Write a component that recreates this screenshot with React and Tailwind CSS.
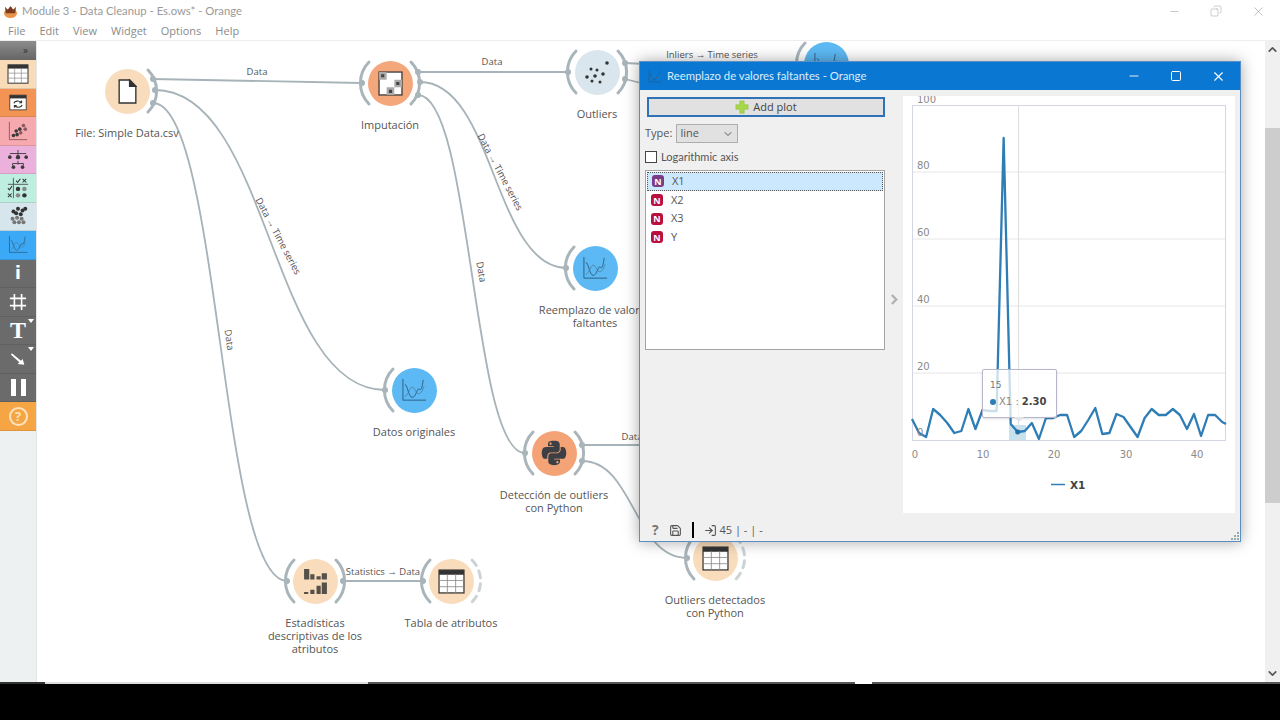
import { FaPython } from 'react-icons/fa';
import { ChevronDown, ChevronUp, Minus, Square, X, Copy, Save, LogIn } from 'lucide-react';

const menus = ['File', 'Edit', 'View', 'Widget', 'Options', 'Help'];

const seriesY = [419, 433, 437, 409, 415, 423, 433, 431, 409, 429, 410, 411, 411, 138, 424, 432, 431, 423, 439, 418, 418, 415, 415, 437, 431, 420, 408, 434, 433, 414, 417, 427, 437, 418, 409, 415, 415, 409, 415, 429, 414, 436, 415, 415, 422];
const seriesPoints = seriesY.map((y, i) => `${912 + i * 7.05},${y}`).join(' ') + ' 1226,424';

function TableIcon({ className }) {
  return (
    <svg viewBox="0 0 26 24" className={className} fill="none">
      <rect x="1" y="1" width="24" height="22" fill="#fff" stroke="#333" strokeWidth="1.2" />
      <rect x="1" y="1" width="24" height="4.5" fill="#333" />
      <path d="M9 5v18M17 5v18M1 11h24M1 17h24" stroke="#888" strokeWidth="0.8" />
    </svg>
  );
}

function ChartIcon({ className }) {
  return (
    <svg viewBox="0 0 28 26" className={className} fill="none" stroke="#23506f" strokeWidth="0.9">
      <path d="M2 1v23h25" />
      <path d="M4 7c3 0 4 14 8 14s5-9 7-9 3 4 5-10" />
      <path d="M4 20c4-1 5-10 8-10s4 7 7 7 4-4 6-8" stroke="#4a7d9e" />
    </svg>
  );
}

// toolbox buttons
const tools = [
  {
    bg: 'bg-[#f8dcb8]',
    icon: <TableIcon className="w-[22px] h-[20px]" />,
  },
  {
    bg: 'bg-[#f49454]',
    icon: (
      <svg viewBox="0 0 22 20" className="w-[18px] h-[17px]" fill="none">
        <rect x="1" y="1" width="20" height="18" fill="#fff" stroke="#333" />
        <rect x="1" y="1" width="20" height="4" fill="#333" />
        <path d="M6 11c1-3 6-4 9-1M16 13c-1 3-6 4-9 1" stroke="#333" strokeWidth="1.4" />
        <path d="M16 7v4h-4zM6 17v-4h4z" fill="#333" />
      </svg>
    ),
  },
  {
    bg: 'bg-[#f6a9ae]',
    icon: (
      <svg viewBox="0 0 22 22" className="w-[20px] h-[20px]" fill="#3a3a3a">
        <path d="M1.500 1v19.500H21" fill="none" stroke="#8a5a60" strokeWidth="1" />
        <circle cx="6" cy="16" r="2" />
        <circle cx="10" cy="15" r="2" />
        <circle cx="9" cy="11" r="2" />
        <circle cx="13" cy="9" r="2" />
        <circle cx="17" cy="5" r="2" fill="#8a5a60" />
        <circle cx="14" cy="13" r="2" fill="#8a5a60" />
        <circle cx="19" cy="9" r="2" fill="#8a5a60" />
      </svg>
    ),
  },
  {
    bg: 'bg-[#ecb0dc]',
    icon: (
      <svg viewBox="0 0 24 22" className="w-[22px] h-[20px]" fill="#3a3a3a">
        <path d="M12 1v6M3 5h18M12 13v4M6 18v-2h12v2" fill="none" stroke="#3a3a3a" strokeWidth="1" />
        <circle cx="3" cy="9" r="2" />
        <circle cx="12" cy="9" r="2.400" />
        <circle cx="21" cy="9" r="2" />
        <circle cx="7" cy="20" r="2" />
        <circle cx="17" cy="20" r="2" />
      </svg>
    ),
  },
  {
    bg: 'bg-[#bdeee0]',
    icon: (
      <svg viewBox="0 0 24 24" className="w-[22px] h-[22px]" fill="#333">
        <path d="M7 1v22M1 8h22" fill="none" stroke="#555" strokeWidth="1" />
        <path d="M10 4l1.500 2 3-4M17 2l4 4m0-4l-4 4M1 12l1.500 2 3-4M1 18l4 4m0-4l-4 4" fill="none" stroke="#333" strokeWidth="1.100" />
        <circle cx="12" cy="13" r="2.400" />
        <circle cx="19" cy="13" r="2.400" fill="#888" />
        <circle cx="12" cy="20" r="2.400" fill="#888" />
        <circle cx="19" cy="20" r="2.400" />
      </svg>
    ),
  },
  {
    bg: 'bg-[#d7e5ec]',
    icon: (
      <svg viewBox="0 0 22 22" className="w-[20px] h-[20px]">
        <g fill="#333">
          <circle cx="6" cy="6" r="2.200" />
          <circle cx="11" cy="3" r="2.200" />
          <circle cx="16" cy="5" r="2.200" />
          <circle cx="9" cy="8" r="2.200" />
          <circle cx="14" cy="9" r="2.200" />
          <circle cx="19" cy="3" r="2.200" />
        </g>
        <g fill="#777">
          <circle cx="5" cy="14" r="2.200" />
          <circle cx="10" cy="13" r="2.200" />
          <circle cx="15" cy="14" r="2.200" />
          <circle cx="7" cy="18" r="2.200" />
          <circle cx="12" cy="18" r="2.200" />
          <circle cx="17" cy="18" r="2.200" />
        </g>
      </svg>
    ),
  },
  {
    bg: 'bg-[#3ca9f6]',
    icon: <ChartIcon className="w-[20px] h-[19px]" />,
  },
  {
    bg: 'bg-[#6b6b6b]',
    icon: <span className="text-white font-bold text-[17px] leading-none font-['DejaVu_Sans',sans-serif]">i</span>,
  },
  {
    bg: 'bg-[#6b6b6b]',
    icon: (
      <svg viewBox="0 0 20 20" className="w-[18px] h-[18px]" stroke="#fff" strokeWidth="1.800">
        <path d="M6 1v18M14 1v18M1 6h18M1 14h18" />
      </svg>
    ),
  },
  {
    bg: 'bg-[#6b6b6b]',
    corner: true,
    icon: <span className="text-white font-bold text-[24px] leading-none font-['Liberation_Serif',serif]">T</span>,
  },
  {
    bg: 'bg-[#6b6b6b]',
    corner: true,
    icon: (
      <svg viewBox="0 0 18 16" className="w-[15px] h-[14px]" fill="#fff">
        <path d="M1 1l11 9 2-2 2 7-8-1 2-2L0 3z" />
      </svg>
    ),
  },
  {
    bg: 'bg-[#6b6b6b]',
    icon: (
      <div className="flex gap-[5px]">
        <div className="w-[5px] h-[17px] bg-white" />
        <div className="w-[5px] h-[17px] bg-white" />
      </div>
    ),
  },
  {
    bg: 'bg-[#f6a545]',
    icon: (
      <div className="w-[19px] h-[19px] mt-[2px] rounded-full border-2 border-[#fde3bd] flex items-center justify-center text-[#fde3bd] text-[13px] font-bold leading-none">
        ?
      </div>
    ),
  },
];

function Toolbox() {
  return (
    <div className="w-[37px] shrink-0 flex flex-col bg-[#eef1f2] border-r border-[#e4e7e8]">
      <div className="h-[19px] bg-gradient-to-b from-[#8c8c8c] to-[#666] text-right pr-2 text-[10px] leading-[18px] text-[#333]">
        »
      </div>
      {tools.map((t, i) => (
        <div key={i} className={`relative h-[28.5px] flex items-center justify-center border-b border-black/10 ${t.bg}`}>
          {t.icon}
          {t.corner && <div className="absolute top-[2px] right-[2px] border-x-[3px] border-t-[4px] border-x-transparent border-t-white" />}
        </div>
      ))}
    </div>
  );
}

function Node({ pos, fill, left, right, dashed, label, children }) {
  return (
    <div className={`absolute w-[70px] h-[70px] flex items-center justify-center ${pos}`}>
      <svg viewBox="0 0 70 70" className="absolute inset-0" fill="none" stroke="#a9b5ba" strokeWidth="3" strokeLinecap="round">
        {left && <path d="M14 14A30 30 0 0 0 14 56" />}
        {right && <path d="M56 14A30 30 0 0 1 56 56" />}
        {dashed && <path d="M56 14A30 30 0 0 1 56 56" stroke="#ccd3d6" strokeDasharray="7 6" />}
      </svg>
      <div className={`w-[45px] h-[45px] rounded-full flex items-center justify-center ${fill}`}>{children}</div>
      {label && (
        <div className="absolute top-[70px] left-[-45px] w-[160px] text-center text-[11px] leading-[13px] text-[#555] whitespace-pre-line">
          {label}
        </div>
      )}
    </div>
  );
}

function Wires() {
  return (
    <svg viewBox="37 41 1228 641" className="absolute inset-0 w-full h-full" fill="none" stroke="#a7b3b8" strokeWidth="1.800">
      <path d="M152 79L362 83" />
      <path d="M155 90C270 90 270 390 385 390" />
      <path d="M153 103C220 103 220 581 287 581" />
      <path d="M418 72H570" />
      <path d="M420 82C494 82 494 268 567 268" />
      <path d="M418 95C472 95 472 453 525 453" />
      <path d="M625 63L645 64" />
      <path d="M625 79L645 84" />
      <path d="M582 445H645" />
      <path d="M582 461C634 461 634 558 687 558" />
      <path d="M343 581H423" />
      <g fill="#a7b3b8" stroke="none">
        <circle cx="153" cy="79" r="3" />
        <circle cx="155" cy="90" r="3" />
        <circle cx="153" cy="103" r="3" />
        <circle cx="362" cy="83" r="3" />
        <circle cx="418" cy="72" r="3" />
        <circle cx="420" cy="82" r="3" />
        <circle cx="418" cy="95" r="3" />
        <circle cx="568" cy="72" r="3" />
        <circle cx="625" cy="63" r="3" />
        <circle cx="625" cy="79" r="3" />
        <circle cx="566" cy="268" r="3" />
        <circle cx="385" cy="390" r="3" />
        <circle cx="525" cy="453" r="3" />
        <circle cx="582" cy="445" r="3" />
        <circle cx="582" cy="461" r="3" />
        <circle cx="687" cy="558" r="3" />
        <circle cx="287" cy="581" r="3" />
        <circle cx="343" cy="581" r="3" />
        <circle cx="423" cy="581" r="3" />
      </g>
      <g fill="#555" stroke="none" fontSize="9.500" textAnchor="middle">
        <text x="257" y="75">Data</text>
        <text x="492" y="65">Data</text>
        <text x="712" y="58">Inliers → Time series</text>
        <text x="383" y="575">Statistics → Data</text>
        <text x="632" y="440">Data</text>
        <text transform="translate(229 340) rotate(82)" y="3">Data</text>
        <text transform="translate(481 272) rotate(80)" y="3">Data</text>
        <text transform="translate(278 236) rotate(62)" y="3">Data → Time series</text>
        <text transform="translate(500 172) rotate(62)" y="3">Data → Time series</text>
        <text transform="translate(640 512) rotate(68)" y="-3">Data</text>
      </g>
    </svg>
  );
}

function Canvas() {
  return (
    <div className="relative flex-1 overflow-hidden bg-white">
      <Wires />
      <Node pos="left-[55px] top-[15px]" fill="bg-[#f9dcbb]" right label="File: Simple Data.csv">
        <svg viewBox="0 0 18 24" className="w-[19px] h-[25px]" fill="#fff" stroke="#333" strokeWidth="1.300">
          <path d="M1 1h10l6 6v16H1z" />
          <path d="M11 1l6 6h-6z" fill="#333" />
        </svg>
      </Node>
      <Node pos="left-[318px] top-[7px]" fill="bg-[#f5a77c]" left right label="Imputación">
        <svg viewBox="0 0 24 24" className="w-[25px] h-[25px]">
          <rect x="1" y="1" width="22" height="22" fill="#fff" stroke="#333" strokeWidth="1.200" />
          <path d="M1 1h7.300v7.300H1zM15.700 8.300H23v7.300h-7.300zM8.300 15.700h7.300V23H8.300z" fill="#aaa" />
          <path d="M3 3h3v3H3zM17.500 10.500h3v3h-3zM10.500 18h3v3h-3z" fill="#444" />
        </svg>
      </Node>
      <Node pos="left-[525px] top-[-4px]" fill="bg-[#d9e6ee]" left right label="Outliers">
        <svg viewBox="0 0 26 24" className="w-[28px] h-[24px]" fill="#333">
          <circle cx="23" cy="3" r="1.800" />
          <circle cx="7" cy="9" r="1.500" />
          <circle cx="13" cy="10" r="1.500" />
          <circle cx="19" cy="14" r="1.800" />
          <circle cx="11" cy="16" r="1.800" />
          <circle cx="3" cy="17" r="1.800" />
          <circle cx="8" cy="21" r="1.500" />
          <circle cx="16" cy="22" r="1.500" />
        </svg>
      </Node>
      <Node pos="left-[523px] top-[192px]" fill="bg-[#5db9f4]" left label={'Reemplazo de valores\nfaltantes'}>
        <ChartIcon className="w-[26px] h-[24px]" />
      </Node>
      <Node pos="left-[342px] top-[314px]" fill="bg-[#5db9f4]" left label="Datos originales">
        <ChartIcon className="w-[26px] h-[24px]" />
      </Node>
      <Node pos="left-[482px] top-[377px]" fill="bg-[#f4a376]" left right label={'Detección de outliers\ncon Python'}>
        <FaPython className="w-[28px] h-[28px] text-[#3c4045]" />
      </Node>
      <Node pos="left-[643px] top-[482px]" fill="bg-[#f9dcbb]" left dashed label={'Outliers detectados\ncon Python'}>
        <TableIcon className="w-[27px] h-[25px]" />
      </Node>
      <Node pos="left-[243px] top-[505px]" fill="bg-[#f9dcbb]" left right label={'Estadísticas\ndescriptivas de los\natributos'}>
        <svg viewBox="0 0 24 26" className="w-[25px] h-[27px]" fill="#55504a">
          <path d="M1 1h5v10H1zM7 6h4v5H7zM13 8h4v3h-4zM18 5h5v6h-5zM1 23h4v2H1zM7 21h4v4H7zM13 17h4v8h-4zM18 14h5v11h-5z" />
        </svg>
      </Node>
      <Node pos="left-[379px] top-[505px]" fill="bg-[#f9dcbb]" left dashed label="Tabla de atributos">
        <TableIcon className="w-[27px] h-[25px]" />
      </Node>
      <Node pos="left-[754px] top-[-12px]" fill="bg-[#5db9f4]" left>
        <ChartIcon className="w-[26px] h-[24px]" />
      </Node>
    </div>
  );
}

function ListRow({ name, selected }) {
  return (
    <div className={`h-[18.700px] flex items-center gap-2 pl-[4px] ${selected ? 'bg-[#cce8ff] border border-dotted border-[#555]' : ''}`}>
      <span className={`w-[12px] h-[12px] rounded-[3px] flex items-center justify-center text-white text-[9px] font-bold leading-none ${selected ? 'bg-[#7b3a83]' : 'bg-[#b9103f]'}`}>
        N
      </span>
      <span className="text-[11px] text-[#555]">{name}</span>
    </div>
  );
}

function Chart() {
  const gridY = [172, 239, 306, 373];
  const yLabels = [['100', 103], ['80', 169], ['60', 236], ['40', 303], ['20', 370], ['0', 436]];
  const xLabels = [['0', 915], ['10', 983], ['20', 1054], ['30', 1126], ['40', 1197]];
  return (
    <div className="relative w-[332px] h-full bg-white overflow-hidden font-['DejaVu_Sans',sans-serif]">
      <svg viewBox="903 96 332 417" className="w-full h-full" fill="none">
        <rect x="1009" y="425" width="17" height="15" fill="#c6e2ee" />
        {gridY.map((y) => <path key={y} d={`M912 ${y}H1225`} stroke="#e6e6e6" />)}
        <path d="M1018.500 105V440" stroke="#dedede" />
        <rect x="912.500" y="105.500" width="313" height="335" stroke="#d3d6e4" />
        <polyline points={seriesPoints} stroke="#2f7db5" strokeWidth="2.300" strokeLinejoin="round" />
        <circle cx="1017.700" cy="432" r="2.500" fill="#1f6fa8" />
        <g fill="#8a8a8a" fontSize="10" stroke="none">
          {yLabels.map(([t, y]) => <text key={t} x="917" y={y}>{t}</text>)}
          {xLabels.map(([t, x]) => <text key={t} x={x} y="458" textAnchor="middle">{t}</text>)}
        </g>
        <path d="M1051 484.500H1065" stroke="#2f7db5" strokeWidth="1.500" />
        <text x="1070" y="488.500" fontSize="10.500" fontWeight="700" fill="#444">X1</text>
      </svg>
      <div className="absolute left-[79px] top-[273px] w-[75px] h-[49px] bg-white/75 border border-[#b6b6cc] rounded-[2px] shadow-sm pl-[7px] pt-[9px]">
        <div className="text-[9px] leading-[12px] text-[#777]">15</div>
        <div className="flex items-center gap-[3px] mt-[4px] text-[10px] leading-[14px] text-[#888]">
          <span className="w-[6px] h-[6px] rounded-full bg-[#2f7db5]" />
          X1 :<span className="font-bold text-[#444]">2.30</span>
        </div>
        <div className="absolute top-full left-[31px] border-x-[5px] border-t-[5px] border-x-transparent border-t-[#e4e4e8]" />
      </div>
    </div>
  );
}

function PlotWindow() {
  return (
    <div className="absolute left-[639px] top-[61px] w-[602px] h-[481px] flex flex-col bg-[#f0f0f0] border border-[#5a8fc4] shadow-[0_0_14px_rgba(0,0,0,0.35)]">
      <div className="h-[28px] shrink-0 flex items-center bg-[#0a78d2] pl-[8px] text-[11.300px] text-[#dcecfa] font-['Lato',sans-serif]">
        <ChartIcon className="w-[14px] h-[13px] mr-[5px]" />
        <span>Reemplazo de valores faltantes - Orange</span>
        <div className="ml-auto flex items-center gap-[29px] pr-[14px] text-white">
          <Minus size={14} strokeWidth={1.500} />
          <Square size={12} strokeWidth={2} />
          <X size={15} strokeWidth={1.800} />
        </div>
      </div>
      <div className="flex-1 flex min-h-0 pt-[6px]">
        <div className="w-[246px] shrink-0 pl-[5px] text-[11px] text-[#555]">
          <div className="mt-[1px] ml-[2px] w-[238px] h-[20px] flex items-center justify-center gap-1 bg-[#e1e1e1] border-2 border-[#2f72b7] text-[#444]">
            <svg viewBox="0 0 16 16" className="w-[14px] h-[14px]">
              <path d="M5.500 1h5v4.500H15v5h-4.500V15h-5v-4.500H1v-5h4.500z" fill="#a6d84a" stroke="#8dbd3a" strokeWidth="0.600" />
            </svg>
            Add plot
          </div>
          <div className="flex items-center gap-[4px] mt-[7px]">
            <span>Type:</span>
            <div className="w-[62px] h-[19px] flex items-center justify-between px-[3px] bg-[#e1e1e1] border border-[#adadad]">
              line
              <ChevronDown size={12} className="text-[#555]" />
            </div>
          </div>
          <div className="flex items-center gap-[4px] mt-[6px] h-[16px] font-['Lato',sans-serif]">
            <div className="w-[12px] h-[12px] bg-white border border-[#444]" />
            Logarithmic axis
          </div>
          <div className="mt-[5px] w-[240px] h-[180px] bg-white border border-[#a3a3a3] p-[1px]">
            <ListRow name="X1" selected />
            <ListRow name="X2" />
            <ListRow name="X3" />
            <ListRow name="Y" />
          </div>
        </div>
        <div className="w-[17px] shrink-0 flex items-center justify-center pb-[10px]">
          <svg viewBox="0 0 10 12" className="w-[9px] h-[11px]" fill="none" stroke="#b0b0b0" strokeWidth="2.500">
            <path d="M2 1l5 5-5 5" />
          </svg>
        </div>
        <Chart />
      </div>
      <div className="relative h-[28px] shrink-0 flex items-center pt-[6px] pl-[12px] text-[11px] text-[#555]">
        <span className="w-[9px] text-[14px] font-bold leading-none text-[#777]">?</span>
        <Save size={13} className="ml-[8px] text-[#555]" />
        <div className="w-[1.500px] h-[16px] bg-black ml-[10px]" />
        <LogIn size={13} className="ml-[10px] text-[#555]" />
        <span className="ml-[3px]">45 | - | -</span>
        <svg viewBox="0 0 8 8" className="absolute right-[1px] bottom-[1px] w-[8px] h-[8px]" fill="#9aa">
          <path d="M6 0h2v2H6zM3 3h2v2H3zM6 3h2v2H6zM0 6h2v2H0zM3 6h2v2H3zM6 6h2v2H6z" />
        </svg>
      </div>
    </div>
  );
}

export default function App() {
  return (
    <div className="relative w-[1280px] h-[720px] overflow-hidden flex flex-col bg-black font-['Open_Sans',sans-serif]">
      {/* title bar */}
      <div className="h-[22px] shrink-0 flex items-center bg-white pl-[3px]">
        <svg viewBox="0 0 16 14" className="w-[15px] h-[13px]">
          <ellipse cx="8" cy="9" rx="7" ry="5" fill="#e8944a" />
          <path d="M2 2l3 3 3-4 3 4 3-3-1 7H3z" fill="#7a3b1e" />
        </svg>
        <span className="ml-[4px] text-[11.300px] text-[#9a9a9a] font-['Lato',sans-serif]">Module 3 - Data Cleanup - Es.ows* - Orange</span>
        <div className="ml-auto flex items-center gap-[29px] pr-[14px] text-[#9a9a9a]">
          <Minus size={13} strokeWidth={1} />
          <Copy size={12} strokeWidth={1} className="-scale-x-100" />
          <X size={15} strokeWidth={1} />
        </div>
      </div>
      {/* menu bar */}
      <div className="h-[19px] shrink-0 flex items-center gap-[14px] bg-white pl-[8px] text-[11px] text-[#8a8a8a] border-b border-[#eeeeee]">
        {menus.map((m) => <span key={m}>{m}</span>)}
      </div>
      <div className="flex-1 flex min-h-0">
        <Toolbox />
        <Canvas />
        <div className="w-[15px] shrink-0 flex flex-col items-center bg-[#f0f0f0] text-[#555]">
          <ChevronUp size={13} strokeWidth={3} className="mt-[2px]" />
          <div className="w-full h-[375px] mt-[72px] bg-[#cdcdcd]" />
          <ChevronDown size={13} strokeWidth={3} className="mt-auto mb-[2px]" />
        </div>
      </div>
      {/* what is left of the horizontal scrollbar */}
      <div className="h-[38px] shrink-0 bg-black">
        <div className="h-[2px] flex">
          <div className="w-[45px] bg-[#333]" />
          <div className="w-[323px] bg-[#ddd]" />
          <div className="w-[487px] bg-[#555]" />
          <div className="w-[17px] bg-white" />
          <div className="flex-1 bg-[#555]" />
        </div>
      </div>
      <PlotWindow />
    </div>
  );
}
